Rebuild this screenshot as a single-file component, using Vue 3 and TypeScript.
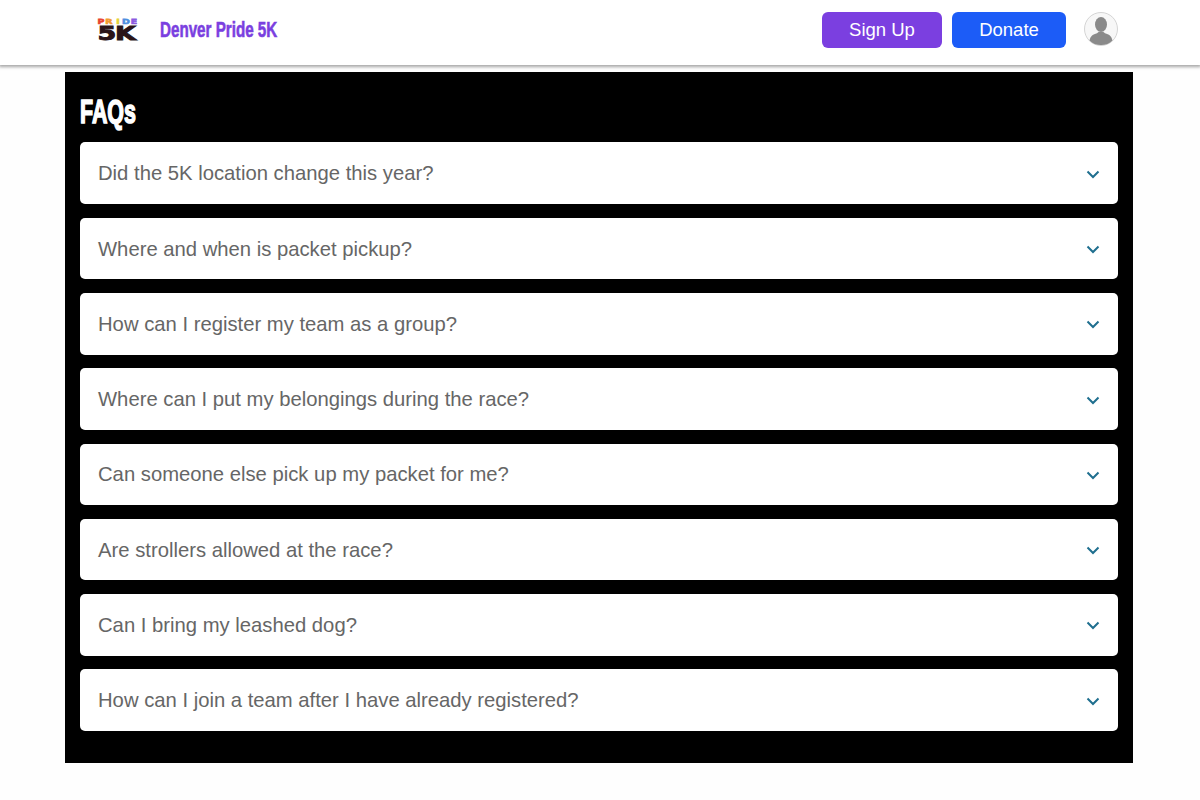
<template>
	<div class="page">
		<header class="site-header">
			<div class="brand">
				<div class="logo">
					<div class="logo-pride">
						<span v-for="letter in prideLetters" :key="letter.char" :style="{ color: letter.color }">{{ letter.char }}</span>
					</div>
					<div class="logo-5k">5K</div>
				</div>
				<span class="brand-name">Denver Pride 5K</span>
			</div>
			<div class="actions">
				<button class="btn btn-signup">Sign Up</button>
				<button class="btn btn-donate">Donate</button>
				<div class="avatar">
					<svg viewBox="0 0 34 34" width="34" height="34">
						<circle cx="17" cy="17" r="16.5" fill="#f7f7f7" stroke="#d4d4d4" />
						<ellipse cx="17" cy="12.5" rx="6" ry="7.5" fill="#8a8a8a" />
						<path d="M5.5 28.5c1-4.5 3.5-6 7.5-7.2l1.5-1.3h5l1.5 1.3c4 1.2 6.5 2.7 7.5 7.2A16 16 0 0 1 17 33 16 16 0 0 1 5.5 28.5z" fill="#8a8a8a" />
					</svg>
				</div>
			</div>
		</header>
		<main class="faq-panel">
			<h2 class="faq-title"><span>FAQs</span></h2>
			<ul class="faq-list">
				<li v-for="question in questions" :key="question" class="faq-item">
					<span>{{ question }}</span>
					<svg class="chevron" viewBox="0 0 14 9" width="14" height="9">
						<path d="M1.5 1.5L7 7l5.5-5.5" fill="none" stroke="#1f6f8f" stroke-width="2" />
					</svg>
				</li>
			</ul>
		</main>
	</div>
</template>

<script setup lang="ts">
const prideLetters = [
	{ char: 'P', color: '#e8432e' },
	{ char: 'R', color: '#f29a2e' },
	{ char: 'I', color: '#e6d23a' },
	{ char: 'D', color: '#4f8fe0' },
	{ char: 'E', color: '#8a5be0' },
];

const questions: string[] = [
	'Did the 5K location change this year?',
	'Where and when is packet pickup?',
	'How can I register my team as a group?',
	'Where can I put my belongings during the race?',
	'Can someone else pick up my packet for me?',
	'Are strollers allowed at the race?',
	'Can I bring my leashed dog?',
	'How can I join a team after I have already registered?',
];
</script>

<style>
html,
body {
	background: #fff;
}
</style>

<style scoped>
.page {
	height: 800px;
	background: #fefefe;
	font-family: "Liberation Sans", Arial, sans-serif;
	overflow: hidden;
}

.site-header {
	height: 65px;
	box-sizing: border-box;
	display: flex;
	align-items: center;
	justify-content: space-between;
	padding: 0 82px 6px 97px;
	background: #fff;
	box-shadow: 0 1px 3px 1px rgba(0, 0, 0, 0.35);
}

.brand {
	display: flex;
	align-items: center;
	gap: 22px;
}

.logo {
	width: 41px;
	display: flex;
	flex-direction: column;
	align-items: center;
	font-family: "DejaVu Sans", sans-serif;
	font-weight: 700;
	line-height: 1;
}

.logo-pride {
	display: flex;
	justify-content: space-between;
	width: 41px;
	height: 7px;
	font-size: 7px;
	line-height: 6px;
	-webkit-text-stroke: 0.6px currentColor;
}

.logo-pride span {
	width: 8px;
	text-align: center;
	transform: scaleX(1.35);
}

.logo-5k {
	height: 15px;
	margin-right: 4px;
	font-size: 19px;
	line-height: 15px;
	color: #2a1418;
	transform: scaleX(1.42);
	letter-spacing: -1px;
	-webkit-text-stroke: 0.9px #2a1418;
}

.brand-name {
	display: inline-block;
	width: 118px;
	white-space: nowrap;
	font-size: 22px;
	font-weight: 700;
	color: #7a3fe0;
	transform: scaleX(0.69);
	transform-origin: left center;
	-webkit-text-stroke: 0.6px #7a3fe0;
}

.actions {
	display: flex;
	align-items: center;
}

.btn {
	height: 36px;
	border: none;
	border-radius: 6px;
	color: #fff;
	font-family: inherit;
	font-size: 18.5px;
	padding: 0;
}

.btn-signup {
	width: 120px;
	background: #7b3fe0;
	margin-right: 10px;
}

.btn-donate {
	width: 114px;
	background: #1c5cf7;
	margin-right: 18px;
}

.avatar {
	width: 34px;
	height: 34px;
	margin-bottom: 2px;
	display: flex;
	align-items: center;
	justify-content: center;
}

.faq-panel {
	width: 1068px;
	height: 691px;
	box-sizing: border-box;
	margin: 7px 0 0 65px;
	padding: 20px 15px 0;
	background: #000;
}

.faq-title {
	margin: 0;
	height: 50.45px;
	font-size: 34px;
	line-height: 38px;
	font-weight: 700;
	color: #fff;
}

.faq-title span {
	display: inline-block;
	transform: scaleX(0.63);
	transform-origin: left center;
	-webkit-text-stroke: 1.6px #fff;
}

.faq-list {
	list-style: none;
	margin: 0;
	padding: 0;
	display: flex;
	flex-direction: column;
	gap: 13.7px;
}

.faq-item {
	height: 61.6px;
	box-sizing: border-box;
	display: flex;
	align-items: center;
	justify-content: space-between;
	padding: 1px 18px 0;
	background: #fff;
	border-radius: 5px;
	font-size: 20.25px;
	color: #666;
}

.chevron {
	margin-top: 1px;
}
</style>
